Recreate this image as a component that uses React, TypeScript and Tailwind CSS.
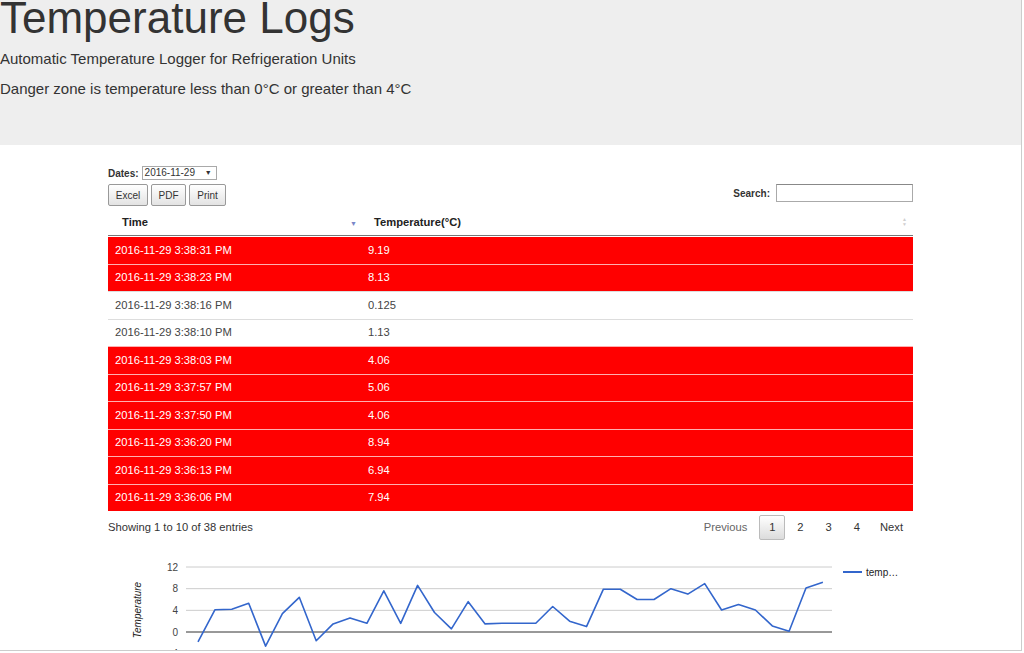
import React from 'react';

// log rows, newest first (what the table shows on page 1)
const rows = [
  { time: '2016-11-29 3:38:31 PM', temp: '9.19' },
  { time: '2016-11-29 3:38:23 PM', temp: '8.13' },
  { time: '2016-11-29 3:38:16 PM', temp: '0.125' },
  { time: '2016-11-29 3:38:10 PM', temp: '1.13' },
  { time: '2016-11-29 3:38:03 PM', temp: '4.06' },
  { time: '2016-11-29 3:37:57 PM', temp: '5.06' },
  { time: '2016-11-29 3:37:50 PM', temp: '4.06' },
  { time: '2016-11-29 3:36:20 PM', temp: '8.94' },
  { time: '2016-11-29 3:36:13 PM', temp: '6.94' },
  { time: '2016-11-29 3:36:06 PM', temp: '7.94' },
];

// all 38 readings, oldest first, for the chart
const series = [
  -1.8, 4.1, 4.2, 5.3, -2.6, 3.4, 6.4, -1.6, 1.5, 2.6, 1.6, 7.6, 1.6, 8.6, 3.6, 0.6, 5.6, 1.5, 1.6,
  1.6, 1.6, 4.7, 2.0, 1.0, 7.9, 7.9, 6.0, 6.0, 8.0, 7.0, 8.94, 4.06, 5.06, 4.06, 1.13, 0.125, 8.13, 9.19,
];

const isDanger = (t: string) => {
  const v = parseFloat(t);
  return v < 0 || v > 4;
};

function Chart() {
  const y = (v: number) => 92 - v * (65 / 12);
  const x = (i: number) => 90 + i * 16.89;
  const points = series.map((v, i) => `${x(i).toFixed(1)},${y(v).toFixed(1)}`).join(' ');
  const ticks = [12, 8, 4, 0, -4];

  return (
    <svg width="920" height="111" className="block" style={{ fontFamily: '"Liberation Sans", Arial, sans-serif' }}>
      {ticks.map((t) => (
        <g key={t}>
          <line x1="78" x2="724" y1={y(t)} y2={y(t)} stroke={t === 0 ? '#333333' : '#cccccc'} strokeWidth="1" />
          <text x="70" y={y(t) + 3.5} textAnchor="end" fontSize="10" fill="#444444">
            {t}
          </text>
        </g>
      ))}
      <text
        x="0"
        y="0"
        transform="translate(33 70) rotate(-90)"
        textAnchor="middle"
        fontSize="10"
        fontStyle="italic"
        fill="#222222"
      >
        Temperature
      </text>
      <polyline points={points} fill="none" stroke="#3366cc" strokeWidth="1.6" strokeLinejoin="round" />
      <line x1="735" x2="754" y1="32" y2="32" stroke="#3366cc" strokeWidth="2" />
      <text x="758" y="35.5" fontSize="10" fill="#222222">
        temp…
      </text>
    </svg>
  );
}

export default function App() {
  return (
    <div className="w-[1022px] bg-white text-[#333] font-['Liberation_Sans',Arial,sans-serif] border-r border-[#cccccc]">
      <div className="h-[145px] bg-[#eeeeee] overflow-hidden">
        <h1 className="text-[44px] leading-[48px] mt-[-6px] font-normal text-[#333]">Temperature Logs</h1>
        <p className="text-[15px] leading-[20px] mt-[7px]">Automatic Temperature Logger for Refrigeration Units</p>
        <p className="text-[15px] leading-[20px] mt-[10px]">Danger zone is temperature less than 0°C or greater than 4°C</p>
      </div>

      <div className="h-[506px] overflow-hidden border-b border-[#cccccc]">
        <div className="ml-[108px] w-[805px] pt-[21px]">
          {/* date picker */}
          <div className="flex items-center h-[14px] text-[10px]">
            <span className="font-bold mr-[3px]">Dates:</span>
            <div className="flex items-center justify-between w-[75px] h-[14px] border border-[#a9a9a9] px-[2px] text-[10px] leading-[12px] text-[#333]">
              <span>2016-11-29</span>
              <span className="text-[7px] mr-[2px]">▼</span>
            </div>
          </div>

          {/* export buttons + search */}
          <div className="flex items-start justify-between mt-[4px] h-[22px]">
            <div className="flex gap-[3px]">
              {[
                { label: 'Excel', w: 'w-[40px]' },
                { label: 'PDF', w: 'w-[35px]' },
                { label: 'Print', w: 'w-[37px]' },
              ].map((b) => (
                <button
                  key={b.label}
                  className={`${b.w} h-[22px] text-[10px] text-[#333] border border-[#999] rounded-[2px] bg-gradient-to-b from-white to-[#e3e3e3]`}
                >
                  {b.label}
                </button>
              ))}
            </div>
            <div className="flex items-center h-[18px]">
              <span className="text-[10px] font-bold mr-[6px]">Search:</span>
              <input className="w-[137px] h-[18px] border border-[#aaaaaa] border-t-[#888] outline-none" />
            </div>
          </div>

          {/* table header */}
          <div className="flex h-[26px] mt-[4px] items-center border-b border-[#777] text-[11.2px] font-bold text-[#222]">
            <div className="w-[254px] pl-[14px] flex items-center justify-between pr-[5px]">
              <span>Time</span>
              <span className="text-[7px] text-[#7a86c8] mt-[4px]">▼</span>
            </div>
            <div className="flex-1 pl-[12px] flex items-center justify-between pr-[6px]">
              <span>Temperature(°C)</span>
              <span className="flex flex-col text-[5px] leading-[5px] text-[#cfcfcf]">
                <span>▲</span>
                <span>▼</span>
              </span>
            </div>
          </div>

          {/* rows */}
          <div>
            {rows.map((r, i) => {
              const red = isDanger(r.temp);
              return (
                <div
                  key={r.time}
                  className={`flex items-center h-[27.5px] text-[11.2px] ${
                    i === 0 ? 'border-t border-white' : red ? 'border-t border-[#ffb0b0]' : 'border-t border-[#dddddd]'
                  } ${red ? 'bg-[#ff0000] text-white' : 'bg-white text-[#444]'}`}
                >
                  <div className="w-[254px] pl-[7px]">{r.time}</div>
                  <div className="flex-1 pl-[6px]">{r.temp}</div>
                </div>
              );
            })}
          </div>

          {/* info + paging */}
          <div className="flex items-center justify-between h-[25px] mt-[4px] text-[11.2px]">
            <span className="text-[#333]">Showing 1 to 10 of 38 entries</span>
            <div className="flex items-center mr-[10px]">
              <span className="text-[#666] mr-[12px]">Previous</span>
              <span className="w-[26px] h-[25px] flex items-center justify-center border border-[#bbb] rounded-[2px] bg-gradient-to-b from-white to-[#dcdcdc]">
                1
              </span>
              <span className="ml-[12px]">2</span>
              <span className="ml-[22px]">3</span>
              <span className="ml-[22px]">4</span>
              <span className="ml-[20px]">Next</span>
            </div>
          </div>
        </div>

        <div className="ml-[108px]">
          <Chart />
        </div>
      </div>
    </div>
  );
}
